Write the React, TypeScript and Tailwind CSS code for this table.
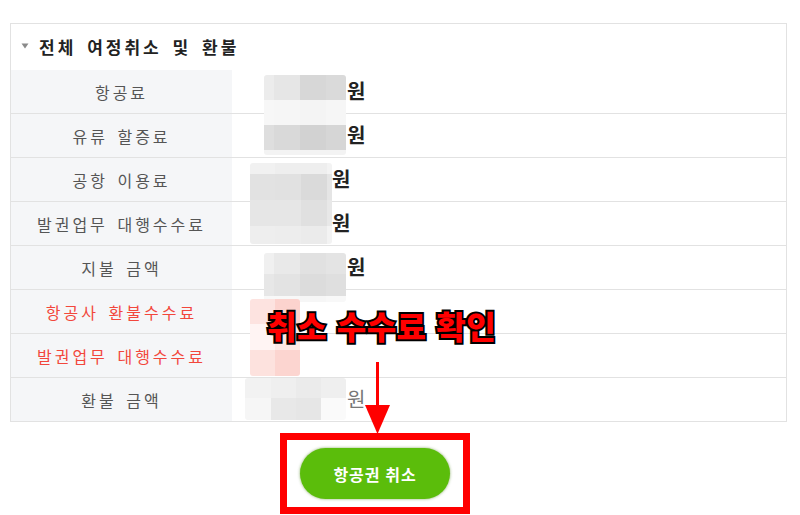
import React from "react";

const font = "font-['Noto_Sans_CJK_KR','Noto_Sans',sans-serif]";

type Row = { label: string; red?: boolean; won?: number; wonBold?: boolean };

const rows: Row[] = [
  { label: "항공료", won: 348, wonBold: true },
  { label: "유류 할증료", won: 348, wonBold: true },
  { label: "공항 이용료", won: 333, wonBold: true },
  { label: "발권업무 대행수수료", won: 333, wonBold: true },
  { label: "지불 금액", won: 348, wonBold: true },
  { label: "항공사 환불수수료", red: true },
  { label: "발권업무 대행수수료", red: true },
  { label: "환불 금액", won: 348 },
];

// mosaic blocks that hide the amounts (left, top relative to table, cell size, colours)
type Mosaic = { x: number; y: number; cols: number[]; rows: number[]; colors: string[][] };

const mosaics: Mosaic[] = [
  {
    x: 253, y: 51, cols: [10, 26, 26, 20], rows: [25, 25, 25, 5],
    colors: [
      ["#ececec", "#e6e6e6", "#d7d7d7", "#dadada"],
      ["#f7f7f7", "#f6f6f6", "#f4f4f4", "#f6f6f6"],
      ["#dedede", "#d9d9d9", "#d2d2d2", "#d6d6d6"],
      ["#f3f3f3", "#f3f3f3", "#f3f3f3", "#f3f3f3"],
    ],
  },
  {
    x: 239, y: 139, cols: [25, 26, 26, 5], rows: [11, 26, 26, 18],
    colors: [
      ["#f1f1f1", "#eeeeee", "#eeeeee", "#f3f3f3"],
      ["#e2e2e2", "#e1e1e1", "#dadada", "#e5e5e5"],
      ["#e6e6e6", "#e6e6e6", "#e0e0e0", "#e8e8e8"],
      ["#eeeeee", "#ededed", "#ebebeb", "#f3f3f3"],
    ],
  },
  {
    x: 253, y: 229, cols: [10, 26, 26, 20], rows: [21, 22, 6],
    colors: [
      ["#f0f0f0", "#e9e9e9", "#e1e1e1", "#e4e4e4"],
      ["#e7e7e7", "#e3e3e3", "#dcdcdc", "#dfdfdf"],
      ["#f8f8f8", "#f8f8f8", "#f6f6f6", "#f8f8f8"],
    ],
  },
  {
    x: 239, y: 275, cols: [25, 25], rows: [25, 26, 26],
    colors: [
      ["#fde3e0", "#fcd3ce"],
      ["#fff4f3", "#fde9e6"],
      ["#fde2de", "#fcd5d0"],
    ],
  },
  {
    x: 234, y: 354, cols: [26, 25, 25, 25], rows: [20, 22],
    colors: [
      ["#f2f2f2", "#efefef", "#ebebeb", "#efefef"],
      ["#f6f6f6", "#e8e8e8", "#e6e6e6", "#fafafa"],
    ],
  },
];

function MosaicBlock({ m }: { m: Mosaic }) {
  return (
    <div
      className="absolute flex flex-col rounded-[3px] overflow-hidden"
      style={{ left: m.x, top: m.y }}
    >
      {m.rows.map((h, r) => (
        <div key={r} className="flex" style={{ height: h }}>
          {m.cols.map((w, c) => (
            <div key={c} style={{ width: w, background: m.colors[r][c] }} />
          ))}
        </div>
      ))}
    </div>
  );
}

export default function App() {
  return (
    <div className={`relative w-[800px] h-[515px] bg-white overflow-hidden ${font}`}>
      {/* refund table */}
      <div className="relative mt-[23px] ml-[10px] w-[777px] border border-[#e2e2e2] border-b-0">
        <div className="h-[46px] flex items-center pl-[10px]">
          <svg width="8" height="6" viewBox="0 0 8 6" className="mr-[10px] mt-[-2px]">
            <path d="M0.5 0.5 L7.5 0.5 L4 5.5 Z" fill="#8a8a8a" />
          </svg>
          <span className="text-[17px] font-bold text-[#222] tracking-[3px] [word-spacing:4px]">
            전체 여정취소 및 환불
          </span>
        </div>
        {rows.map((row, i) => (
          <div key={i} className="flex h-[44px] border-b border-[#e2e2e2]">
            <div
              className={`w-[221px] bg-[#f5f6f8] flex items-center justify-center text-[16px] tracking-[3px] [word-spacing:3px] ${
                row.red ? "text-[#f2473c]" : "text-[#555]"
              }`}
            >
              {row.label}
            </div>
            <div className="relative flex-1">
              {row.won !== undefined && (
                <span
                  className={`absolute top-[6px] text-[20px] ${
                    row.wonBold ? "font-bold text-[#222]" : "text-[#777]"
                  }`}
                  style={{ left: row.won - 233 }}
                >
                  원
                </span>
              )}
            </div>
          </div>
        ))}
        {mosaics.map((m, i) => (
          <MosaicBlock key={i} m={m} />
        ))}
      </div>

      {/* highlighted cancel button */}
      <div className="mt-[11px] ml-[280px] w-[190px] h-[81px] border-[7px] border-[#ff0000] flex items-center justify-center">
        <button className="w-[150px] h-[51px] rounded-full bg-[#5bbd0b] text-white text-[16px] font-bold tracking-[1px] shadow-[0_0_3px_rgba(60,120,0,0.6)]">
          항공권 취소
        </button>
      </div>

      {/* annotation */}
      <div className="absolute left-[267px] top-[309px] text-[32px] font-black text-[#ff0000] tracking-[0.5px] leading-none [-webkit-text-stroke:4px_#000] [paint-order:stroke_fill] [word-spacing:2px]">
        취소 수수료 확인
      </div>
      <svg className="absolute left-[364px] top-[360px]" width="27" height="76" viewBox="0 0 27 76">
        <line x1="13.5" y1="2" x2="13.5" y2="50" stroke="#ff0000" strokeWidth="3" />
        <path d="M1 45 L26 45 L13.5 74 Z" fill="#ff0000" />
      </svg>
    </div>
  );
}
